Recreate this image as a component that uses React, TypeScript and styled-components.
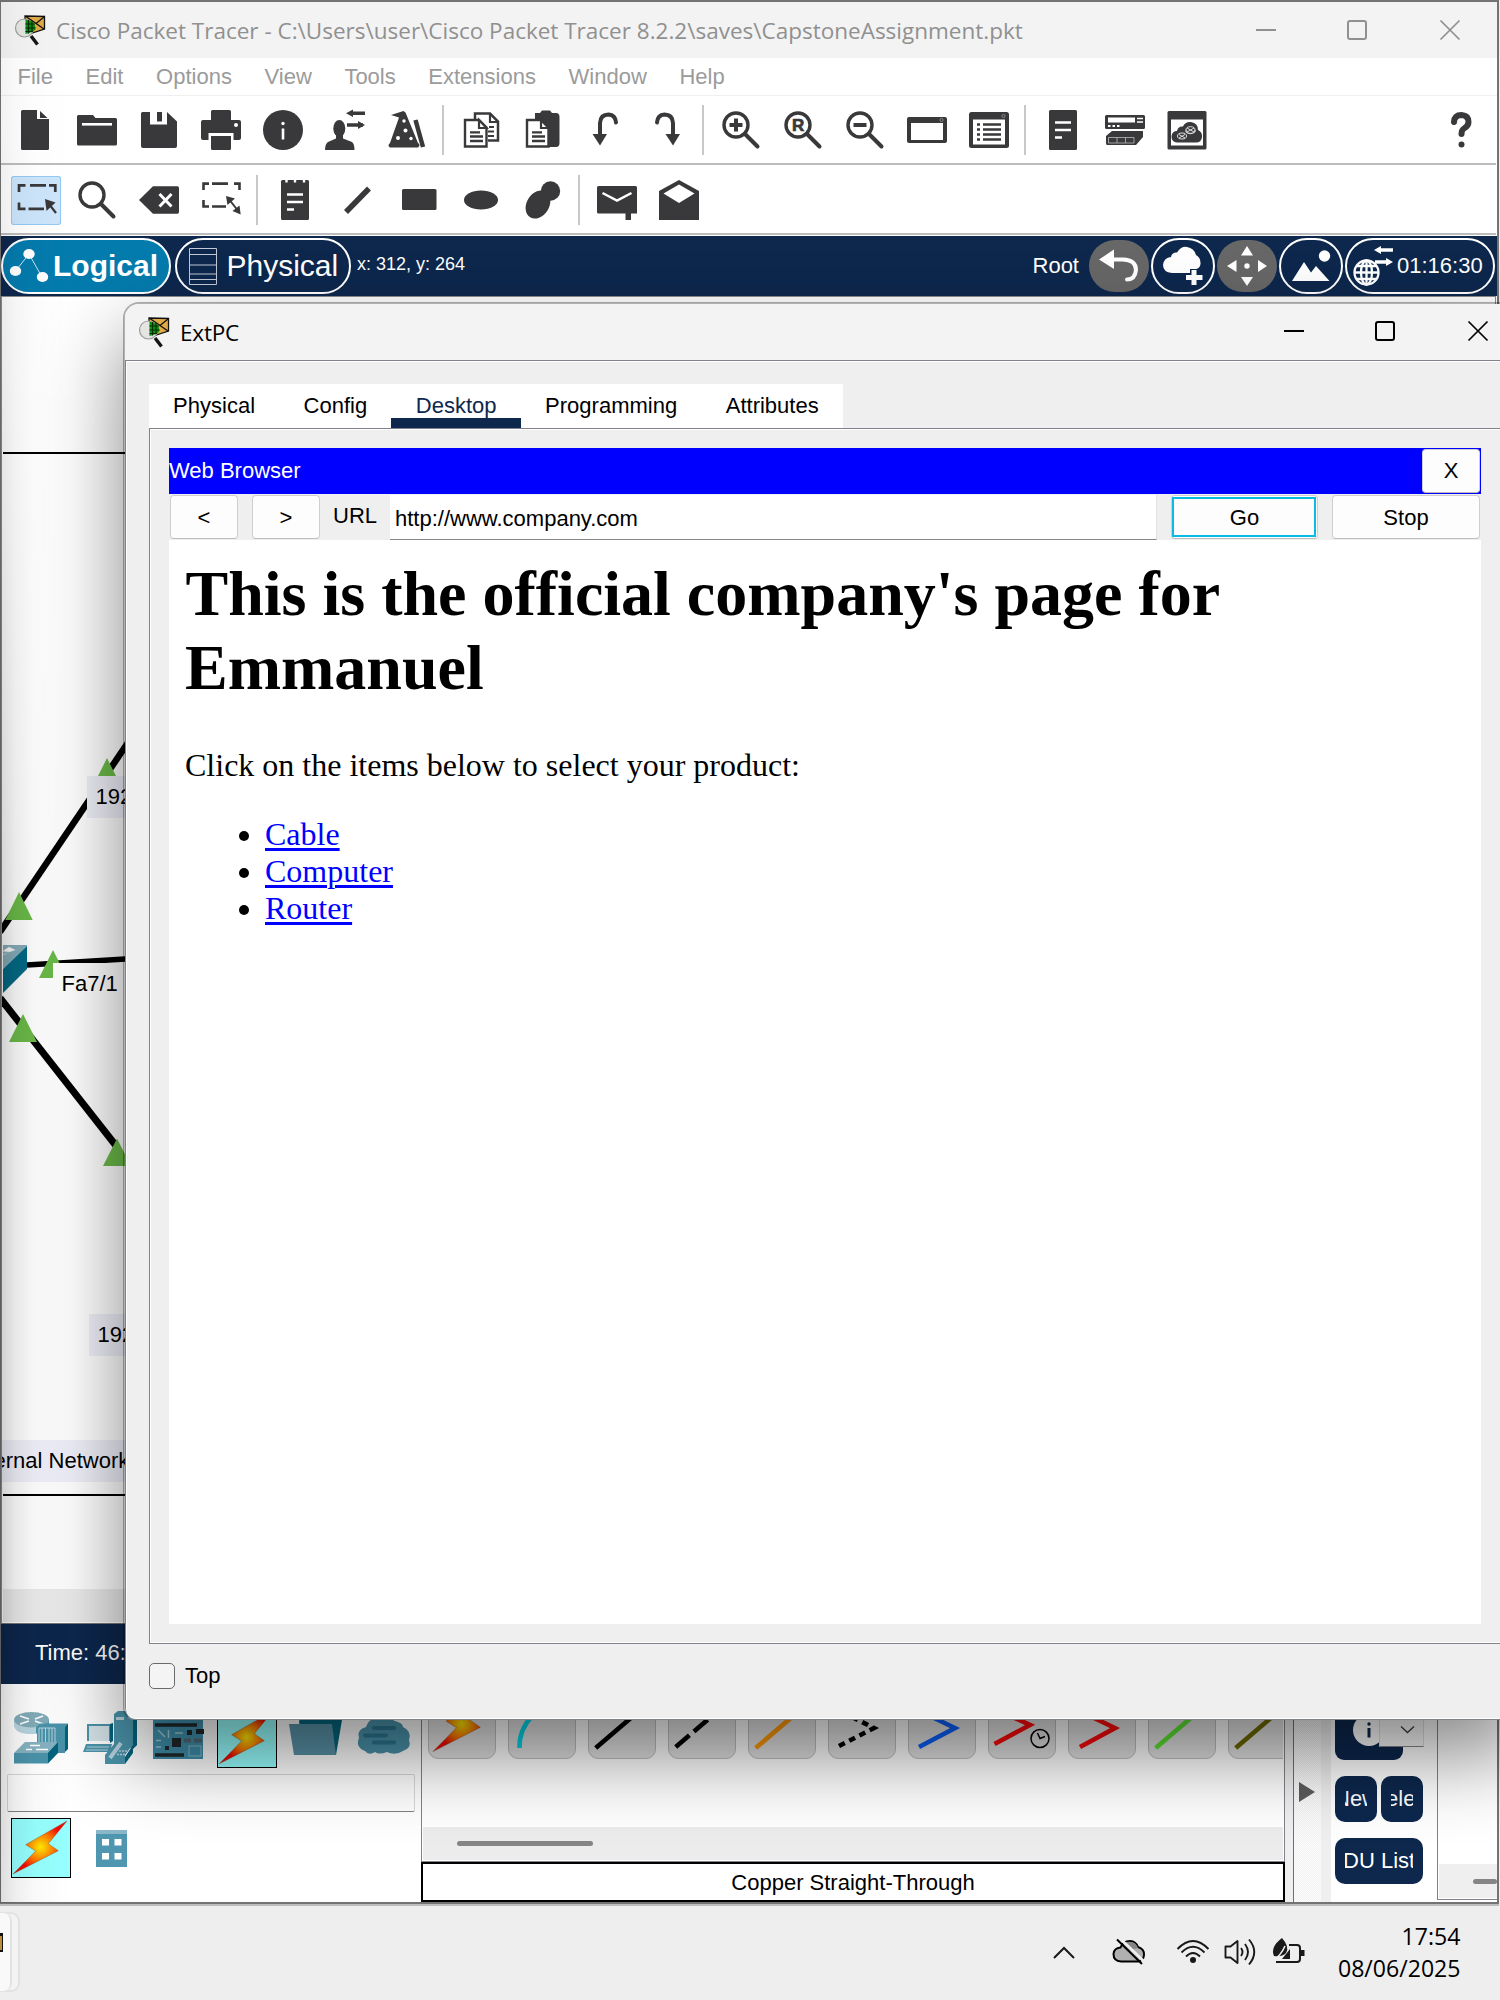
import React from "react";
import styled, { createGlobalStyle } from "styled-components";

const INK = "#39393b";
const NAVY = "#0d274d";
const LINE = "#7f8389";
const ARIAL = `"Liberation Sans", Arial, sans-serif`;
const SEGOE = `"Open Sans", "Noto Sans", sans-serif`;

const GlobalStyle = createGlobalStyle`
  *, *::before, *::after { box-sizing: border-box; }
  html, body { margin: 0; padding: 0; background: #eee; }
  body { font-family: ${ARIAL}; font-size: 22px; color: #000; overflow: hidden; }
  svg { display: block; flex: none; overflow: visible; }
`;

const Screen = styled.div`
  position: relative;
  width: 1500px;
  height: 2000px;
  display: flex;
  flex-direction: column;
  overflow: hidden;
  background: #eee;
`;

/* ---------- main window ---------- */

const MainWindow = styled.div`
  width: 1499px;
  height: 1904px;
  display: flex;
  flex-direction: column;
  background: #fff;
  border: solid #737373;
  border-width: 2px 2px 2px 1px;
  box-shadow: 0 2px 0 #bdbdbd;
  flex: none;
`;

const TitleBar = styled.div<{ $active?: boolean }>`
  height: 56px;
  flex: none;
  display: flex;
  align-items: center;
  background: #f3f3f3;
  color: ${(p) => (p.$active ? "#000" : "#909090")};
  padding-left: 14px;
  gap: 10px;
  font-family: ${SEGOE};
`;

const TitleText = styled.span<{ $spacing: number }>`
  font-size: 22.5px;
  line-height: 56px;
  letter-spacing: ${(p) => p.$spacing}px;
  white-space: nowrap;
  padding-top: 2px;
`;

const WindowButtons = styled.div<{ $right: number; $lift?: number }>`
  margin-left: auto;
  margin-right: ${(p) => p.$right}px;
  margin-bottom: ${(p) => p.$lift ?? 0}px;
  display: flex;
  gap: 72px;

  svg:nth-child(2) { margin: 0 1px 0 -1px; }
`;

const MenuBar = styled.div`
  height: 38px;
  flex: none;
  display: flex;
  align-items: center;
  gap: 32.6px;
  padding-left: 16.5px;
  color: #9b9b9b;
  border-bottom: 1px solid #efefef;
`;

const ToolBar = styled.div<{ $height: number; $drop?: number }>`
  height: ${(p) => p.$height}px;
  margin-right: 1px;
  flex: none;
  display: flex;
  align-items: center;
  padding-left: 3px;
  padding-top: ${(p) => p.$drop ?? 0}px;
  border-bottom: 2px solid #bdbdbd;
`;

const Tool = styled.div<{ $selected?: boolean }>`
  width: ${(p) => (p.$selected ? 50 : 62)}px;
  height: 49px;
  margin: ${(p) => (p.$selected ? "0 5px 0 7px" : "0")};
  display: flex;
  align-items: center;
  justify-content: center;
  border-radius: 3px;
  background: ${(p) => (p.$selected ? "#cce5fb" : "transparent")};
  box-shadow: ${(p) => (p.$selected ? "inset 0 0 0 1px #92c9f5" : "none")};
`;

const ToolDivider = styled.div`
  width: 2px;
  height: 50px;
  margin: 0 6px 0 4px;
  background: #c8c8c8;
`;

const Push = styled.div`
  margin-left: auto;
  margin-right: 4px;
`;

const NavBar = styled.div`
  height: 60px;
  margin-top: 1px;
  flex: none;
  display: flex;
  align-items: center;
  gap: 2px;
  background: ${NAVY};
  color: #fff;
`;

const Pill = styled.div<{ $w: number; $bg?: string; $bold?: boolean; $pad?: number; $ml?: number }>`
  width: ${(p) => p.$w}px;
  height: 56px;
  margin-left: ${(p) => p.$ml ?? 0}px;
  border: 2px solid #fff;
  border-radius: 28px;
  background: ${(p) => p.$bg || "transparent"};
  display: flex;
  align-items: center;
  padding-left: ${(p) => p.$pad ?? 0}px;
  font-size: 30px;
  font-weight: ${(p) => (p.$bold ? 700 : 400)};
  justify-content: ${(p) => (p.$pad === undefined ? "center" : "flex-start")};
`;

const PillText = styled.span<{ $gap: number }>`
  margin-left: ${(p) => p.$gap}px;
`;

const GreyPill = styled.div`
  width: 60px;
  height: 52px;
  border-radius: 26px;
  background: #676767;
  display: flex;
  align-items: center;
  justify-content: center;
`;

const Coordinates = styled.span`
  font-size: 18px;
  margin-left: 4px;
  padding-bottom: 4px;
`;

const RootLabel = styled.span`
  margin-left: auto;
  margin-right: 8px;
`;

const ClockText = styled.span`
  font-size: 22px;
  margin-left: 4px;
`;

const Workspace = styled.div`
  position: relative;
  height: 1328px;
  flex: none;
  overflow: hidden;
  border: 1px solid #8d8d8d;
  border-bottom-color: #777;
  margin-right: 1px;
  background: #fff;
`;

const CanvasDrawing = styled.svg`
  position: absolute;
  left: 1px;
  top: 0;
`;

const CanvasLabel = styled.span<{ $x: number; $y: number; $w: number; $bg?: string }>`
  position: absolute;
  left: ${(p) => p.$x - 2}px;
  top: ${(p) => p.$y - 297}px;
  width: ${(p) => p.$w}px;
  height: 42px;
  line-height: 42px;
  padding-left: 8.5px;
  white-space: nowrap;
  background: ${(p) => p.$bg || "#f0f0fa"};
`;

const TimeBar = styled.div`
  height: 60px;
  flex: none;
  background: ${NAVY};
  color: #fff;
  line-height: 57px;
  padding-left: 34px;
`;

const BottomArea = styled.div`
  flex: 1;
  display: flex;
  min-height: 0;
`;

const Palette = styled.div`
  width: 420px;
  flex: none;
  padding-top: 24px;
`;

const DeviceRow = styled.div`
  display: flex;
  height: 60px;
  align-items: center;
  padding-left: 6px;
`;

const DeviceSlot = styled.div<{ $w?: number }>`
  width: ${(p) => p.$w || 68.5}px;
  height: 60px;
  display: flex;
  align-items: center;
  justify-content: center;
  flex: none;
`;

const BoltFrame = styled.div`
  width: 60px;
  height: 60px;
  border: 1px solid #000;
  background: #97ffff;
`;

const SearchField = styled.div`
  width: 408px;
  height: 38px;
  margin: 6px 0 6px 6px;
  border: 1px solid #d8d8d8;
  border-bottom-color: #808080;
  border-radius: 2px;
  background: #ffffff;
`;

const Connections = styled.div`
  width: 864px;
  flex: none;
  display: flex;
  flex-direction: column;
`;

const ConnectionFrame = styled.div`
  height: 178px;
  border: solid ${LINE};
  border-width: 0 1px 1px 1px;
  display: flex;
  flex-direction: column;
  overflow: hidden;
`;

const TileRow = styled.div`
  display: flex;
  gap: 12px;
  padding: 6.5px 0 0 6px;
  height: 143px;
  overflow: hidden;
  margin-right: 1px;
`;

const Tile = styled.div`
  width: 68px;
  height: 68px;
  flex: none;
  border: 1.5px solid #bfbfbf;
  border-radius: 10px;
  background: #e3e3e3;
  svg { margin: -1.5px; }
`;

const TileScroll = styled.div`
  height: 33px;
  margin: 0 1px;
  background: #ececec;
  display: flex;
  align-items: center;
  padding: 0 0 0 34px;
`;

const Thumb = styled.div<{ $w: number }>`
  width: ${(p) => p.$w}px;
  height: 5px;
  border-radius: 3px;
  background: #858585;
`;

const ConnectionName = styled.div`
  height: 40px;
  border: 2px solid #000;
  line-height: 37px;
  text-align: center;
`;

const Splitter = styled.div`
  width: 46px;
  flex: none;
  display: flex;
  background: #efefef;
`;

const SplitterGrip = styled.div`
  width: 28px;
  margin-left: 8px;
  border-left: 1px solid #707070;
  background: repeating-conic-gradient(#f0f0f0 0% 25%, #fff 0% 50%) 0 0 / 2px 2px;
  padding: 98px 0 0 5px;
`;

const PduColumn = styled.div`
  width: 106px;
  flex: none;
  padding: 14px 0 0 4px;
  display: flex;
  flex-direction: column;
`;

const PduTop = styled.div`
  display: flex;
  height: 62px;
`;

const PduInfo = styled.div`
  width: 68px;
  height: 62px;
  flex: none;
  border-radius: 9px;
  background: ${NAVY};
  padding: 16px 0 0 18px;
`;

const Combo = styled.div`
  width: 45px;
  height: 49px;
  flex: none;
  margin-left: -24px;
  border: 1px solid #e0e0e0;
  border-bottom-color: #868686;
  background: #fbfbfb;
  display: flex;
  justify-content: center;
  padding: 26px 0 0 11px;
`;

const PduButtons = styled.div`
  display: flex;
  gap: 4px;
  margin-top: 16px;
`;

const NavyButton = styled.div<{ $w: number; $shift?: number }>`
  width: ${(p) => p.$w}px;
  height: 46px;
  border-radius: 10px;
  background: ${NAVY};
  color: #fff;
  padding: 0 10px;
  line-height: 45px;

  span {
    display: flex;
    justify-content: center;
    overflow: hidden;
    white-space: nowrap;
    text-indent: ${(p) => p.$shift ?? 0}px;
  }
`;

const PduList = styled.div`
  flex: 1;
  height: 216px;
  border: solid ${LINE};
  border-width: 0 0 1px 1px;
  display: flex;
  flex-direction: column;
  justify-content: flex-end;
  overflow: hidden;
`;

const PduScroll = styled.div`
  height: 34px;
  margin: 0 0 1px 1px;
  background: #efefef;
  display: flex;
  align-items: center;
  padding: 0 0 0 34px;
`;

const EdgeShade = styled.div`
  position: absolute;
  left: 0;
  top: 0;
  width: 70px;
  height: 1903px;
  background: linear-gradient(to right, rgba(0,0,0,.19), rgba(0,0,0,.09) 22%, rgba(0,0,0,.03) 50%, rgba(0,0,0,0));
  mask-image: linear-gradient(to bottom, rgba(0,0,0,.2), rgba(0,0,0,.45) 18%, #000 50%, #000 85%, rgba(0,0,0,.7));
`;

/* ---------- ExtPC window ---------- */

const DeviceWindow = styled.div`
  position: absolute;
  left: 123px;
  top: 302px;
  width: 1400px;
  height: 1418px;
  border: 2px solid rgba(0, 0, 0, 0.3);
  border-bottom: 1px solid #7f8489;
  border-radius: 16px 0 0 12px;
  background: #efefef;
  background-clip: padding-box;
  box-shadow: 0 36px 80px rgba(0, 0, 0, 0.47);
  overflow: hidden;
  display: flex;
  flex-direction: column;
`;

const DeviceBody = styled.div`
  flex: 1;
  border: solid ${LINE};
  border-width: 1px 0 0 1px;
  box-shadow: inset 1px 1px 0 #fff, inset 0 -1px 0 #fff;
  border-bottom-left-radius: 10px;
  padding: 23px 0 0 23px;
`;

const Tabs = styled.div`
  display: inline-flex;
  height: 44px;
  background: #fff;
  vertical-align: top;
`;

const Tab = styled.div<{ $active?: boolean }>`
  padding: 0 24.5px 0 24.1px;
  line-height: 44px;
  color: ${(p) => (p.$active ? NAVY : "#000")};
  box-shadow: ${(p) => (p.$active ? `inset 0 -10px 0 ${NAVY}` : "none")};
  margin-left: ${(p) => (p.$active ? "-0.6px" : "0")};
  padding-left: ${(p) => (p.$active ? "24.7px" : "24.1px")};
`;

const TabPanel = styled.div`
  height: 1216px;
  border: 1px solid ${LINE};
  box-shadow: inset 1px 1px 0 #fff, inset 0 -1px 0 #fff;
  padding: 19px 0 0 19px;
`;

const Browser = styled.div`
  width: 1312px;
  height: 1176px;
  display: flex;
  flex-direction: column;
`;

const BrowserTitle = styled.div`
  height: 46px;
  background: #0000ff;
  color: #fff;
  display: flex;
  justify-content: space-between;
  padding: 1px;
  line-height: 43px;
  span { margin-left: -1px; }
`;

const Button = styled.div<{ $w: number; $ml?: number; $focus?: boolean; $line?: number }>`
  width: ${(p) => p.$w}px;
  height: 44px;
  flex: none;
  margin-left: ${(p) => p.$ml || 0}px;
  border: 1px solid #cfcfcf;
  border-bottom-color: #bcbcbc;
  border-radius: 4px;
  background: #fdfdfd;
  color: #000;
  text-align: center;
  line-height: ${(p) => p.$line ?? 43}px;
  position: relative;
  &::after {
    content: "";
    display: ${(p) => (p.$focus ? "block" : "none")};
    position: absolute;
    inset: 1px 1px 1px 0;
    border: 2px solid #0bbbe3;
  }
`;

const AddressRow = styled.div`
  height: 46px;
  display: flex;
  padding: 1px;
`;

const UrlLabel = styled.span`
  width: 70px;
  padding-left: 13px;
  line-height: 42px;
`;

const UrlInput = styled.div`
  width: 767px;
  height: 45px;
  background: #fff;
  border-right: 1px solid #e2e2e2;
  border-bottom: 1px solid #868686;
  padding-left: 5px;
  line-height: 47px;
`;

const Page = styled.div`
  flex: 1;
  background: #fff;
  padding: 17px 16px 16px;
  font-family: "Liberation Serif", "Times New Roman", serif;
  font-size: 32px;
  line-height: 37px;

  h1 {
    margin: 0 0 42px;
    font-size: 64px;
    line-height: 74px;
    max-width: 1150px;
    text-indent: 0.5px;
  }
  p { margin: 0 0 32px; }
  ul { margin: 0; padding-left: 80px; }
  a { color: #0000ff; text-decoration: underline; text-decoration-thickness: 3px; text-underline-offset: 3px; }
`;

const TopCheck = styled.label`
  display: flex;
  align-items: center;
  gap: 10px;
  margin-top: 18px;
  line-height: 27px;
`;

const Box = styled.span`
  width: 26px;
  height: 26px;
  border: 1.5px solid #6b6b6b;
  border-radius: 5px;
  background: #f4f4f4;
`;

/* ---------- taskbar ---------- */

const Taskbar = styled.div`
  margin-top: 2px;
  height: 94px;
  display: flex;
  align-items: center;
  padding-bottom: 2px;
  background: #eee;
`;

const TaskCard = styled.div`
  width: 20px;
  height: 80px;
  border: 2px solid #e2e2e2;
  border-left: 0;
  border-radius: 0 9px 9px 0;
  background: #f3f3f3;
  display: flex;
`;

const TaskCardFront = styled.div`
  width: 12px;
  height: 78px;
  margin-top: -1px;
  border-right: 2px solid #e2e2e2;
  border-radius: 0 8px 8px 0;
  background: #f9f9f9;
  display: flex;
  align-items: center;
  padding-bottom: 20px;
`;

const TaskIconEdge = styled.div`
  width: 3px;
  height: 19px;
  background: #b98e3c;
  border: solid #111;
  border-width: 3px 1.5px 2px 0;
`;

const Tray = styled.div`
  margin-left: auto;
  display: flex;
  align-items: center;
  color: #191919;
`;

const TraySlot = styled.div<{ $w: number }>`
  width: ${(p) => p.$w}px;
  display: flex;
  justify-content: center;
`;

const Clock = styled.div`
  width: 142px;
  margin-right: 39.5px;
  text-align: right;
  font-family: ${SEGOE};
  font-size: 23.1px;
  line-height: 32px;
`;

/* ---------- icons ---------- */

const Icon = ({ children, size = 40, box = 40 }: { children: React.ReactNode; size?: number; box?: number }) => (
  <svg width={size} height={size} viewBox={`0 0 ${box} ${box}`} fill={INK}>
    {children}
  </svg>
);

const AppLogo = () => (
  <svg width="31" height="31" viewBox="0 0 31 31">
    <path d="M10 1 L29.5 1.5 L29.5 14 L14 19 L10 15 Z" fill="#e0aa48" stroke="#111" strokeWidth="1.3" />
    <path d="M11 1.5 L21 8.5 L29 2 M21 8.5 L29 14" fill="none" stroke="#111" strokeWidth="1.3" />
    <circle cx="9.5" cy="13" r="9" fill="#e4e4e0" stroke="#9c9c9c" strokeWidth="1.2" />
    <path d="M10.5 4.5 Q21 6 20.5 14 Q19 17 10.5 19 Z" fill="#0a8f12" />
    <path d="M13.5 5 V18.5 M17 6 V17 M10.5 9 H20 M10.5 13 H20.5 M10.5 16.5 H18" stroke="#062c06" strokeWidth="1.1" />
    <path d="M16 21 L22.5 29.5" stroke="#151515" strokeWidth="3.4" />
  </svg>
);

const Caption = ({ color }: { color: string }) => (
  <>
    <svg width="20" height="20" stroke={color} strokeWidth="2" fill="none"><path d="M0 10 H20" /></svg>
    <svg width="20" height="20" stroke={color} strokeWidth="2" fill="none"><rect x="1" y="1" width="18" height="18" rx="2" /></svg>
    <svg width="20" height="20" stroke={color} strokeWidth="1.7" fill="none"><path d="M0.5 0.5 L19.5 19.5 M19.5 0.5 L0.5 19.5" /></svg>
  </>
);

const Magnifier = ({ children }: { children?: React.ReactNode }) => (
  <Icon>
    <circle cx="15" cy="15" r="12" fill="none" stroke={INK} strokeWidth="3.4" />
    <path d="M24 24 L36.5 36.5" stroke={INK} strokeWidth="4" strokeLinecap="round" />
    {children}
  </Icon>
);

const FrontSheet = () => (
  <>
    <path d="M4 10 H18 L25.5 17.5 V36.5 H4 Z" fill="#fff" stroke={INK} strokeWidth="2.4" />
    <path d="M18 10 V18 H25.5 Z" fill="#fff" stroke={INK} strokeWidth="2.2" />
    <path d="M9 22.3 H19 M9 26.5 H22 M9 31 H22" stroke={INK} strokeWidth="2.3" />
  </>
);

const NewIcon = () => <Icon><path d="M7.5 0 H22 V9 H34 V38.5 Q34 40 32.5 40 H7.5 Q6 40 6 38.5 V1.5 Q6 0 7.5 0 Z M25 1 L32.5 8 H25 Z" /></Icon>;
const OpenIcon = () => <Icon><path d="M1.5 5 H16 L18.5 8 H38.5 Q40 8 40 9.5 V34 Q40 35.500 38.5 35.500 H1.500 Q0 35.500 0 34 V6.500 Q0 5 1.500 5 Z" /><path d="M5 14.300 H35" stroke="#fff" strokeWidth="2.600" /></Icon>;
const SaveIcon = () => <Icon><path d="M3.500 2 H11 V14.500 H28 V2 L38 11.500 V36 Q38 38 36 38 H4 Q2 38 2 36 V3.500 Q2 2 3.500 2 Z" /><path d="M18 2 H23 V11.500 H18 Z" /></Icon>;
const PrintIcon = () => <Icon><path d="M11.500 0 H28.500 Q30 0 30 1.500 V10 H38 Q40 10 40 12 V28 Q40 30 38 30 H32.500 V23 H7.500 V30 H2 Q0 30 0 28 V12 Q0 10 2 10 H10 V1.500 Q10 0 11.500 0 Z M10 26 H30 V38.500 Q30 40 28.500 40 H11.500 Q10 40 10 38.500 Z" /><circle cx="35" cy="15" r="2" fill="#fff" /></Icon>;
const InfoIcon = () => <Icon><circle cx="20" cy="20" r="20" /><circle cx="20" cy="13.500" r="1.700" fill="#fff" /><path d="M20 18.500 V29.500" stroke="#fff" strokeWidth="2.600" /></Icon>;
const UserIcon = () => (
  <Icon>
    <ellipse cx="14.300" cy="18.500" rx="6" ry="8.500" />
    <path d="M11 24 H18 V28.500 L27 32 Q29.500 34 29.500 40 H0 Q0 34 3 32 L11 28.500 Z" />
    <path d="M25 3.300 H40 M22 15 H38" stroke={INK} strokeWidth="3.400" />
    <path d="M21 3.300 L28 -0.500 V7 Z M40 15 L33 11 V19 Z" />
  </Icon>
);
const WizardIcon = () => (
  <Icon>
    <path d="M4 5 L16.500 1 L18.500 2.500 L31 33 Q34 35 31 37.500 H3 Q0 35.500 3 33 L12 7.500 Z" />
    <path d="M28.500 10 L36 37" stroke={INK} strokeWidth="4.500" />
    <g fill="#fff"><circle cx="17" cy="11" r="1.700" /><circle cx="18.500" cy="20.500" r="2" /><circle cx="11" cy="28" r="2" /><circle cx="24" cy="28.500" r="1.700" /></g>
  </Icon>
);
const CopyIcon = () => (
  <Icon>
    <path d="M14 9 V3.500 H29 L37 11.500 V30.500 H27" fill="none" stroke={INK} strokeWidth="2.500" />
    <path d="M29 3.500 V12 H37 M28 17 H33 M27 21.500 H33 M27 26 H33" fill="none" stroke={INK} strokeWidth="2.200" />
    <FrontSheet />
  </Icon>
);
const PasteIcon = () => <Icon><path d="M12 3 H17 L19 0.500 H27 L29 3 H33 Q36.500 3 36.500 7 V33 Q36.500 37 33 37 H12 Z" /><FrontSheet /></Icon>;
const UndoIcon = () => <Icon><path d="M15 24 V13 Q15.500 4.500 23.500 4.500 Q30.500 5 31 12.500" fill="none" stroke={INK} strokeWidth="4" strokeLinecap="round" /><path d="M7.500 24 H22 L15 35.500 Z" /></Icon>;
const RedoIcon = () => <Icon><path d="M26 24 V13 Q25.500 4.500 17.500 4.500 Q10.500 5 10 12.500" fill="none" stroke={INK} strokeWidth="4" strokeLinecap="round" /><path d="M33 24 H18.500 L26 35.500 Z" /></Icon>;
const RLetter = styled.text`
  font: 700 17px ${ARIAL};
  stroke: ${INK};
  stroke-width: 0.7px;
`;
const WindowIcon = () => <Icon><rect x="0" y="7" width="40" height="26" rx="2" /><rect x="4" y="13" width="32" height="17" fill="#fff" /><circle cx="34.500" cy="10" r="1.600" fill="none" stroke="#999" strokeWidth="0.800" /></Icon>;
const ListIcon = () => (
  <Icon>
    <rect x="0" y="2" width="40" height="36" rx="2.500" /><rect x="4" y="9.500" width="32" height="25" fill="#fff" />
    <path d="M8 14.500 H11 M8 19.500 H11 M8 24.500 H11 M8 29.500 H11 M14 14.500 H32 M14 19.500 H32 M14 24.500 H32 M14 29.500 H32" stroke={INK} strokeWidth="2.600" />
    <circle cx="34.500" cy="6" r="1.600" fill="none" stroke="#999" strokeWidth="0.800" />
  </Icon>
);
const DocIcon = () => <Icon><rect x="6" y="0" width="28" height="40" rx="1.500" /><path d="M12 12.500 H28 M12 20 H28 M12 27.500 H19" stroke="#fff" strokeWidth="2.300" /></Icon>;
const DevicesIcon = () => (
  <Icon>
    <rect x="0" y="5" width="40" height="14" rx="1.500" />
    <rect x="3" y="7.500" width="27" height="5" fill="#fff" />
    <path d="M32 8.500 H38 M32 12 H38" stroke="#fff" strokeWidth="1.300" />
    <path d="M3 16 H5.500 M7.500 16 H10 M12 16 H14.500" stroke="#fff" strokeWidth="2" />
    <path d="M7 21 H38 V27 L31 35 H2 Q1 35 1 33 V26 Z" />
    <path d="M3.500 27.500 H29 V33 H3.500 Z M12 27.500 V33 M20.500 27.500 V33" fill="none" stroke="#bbb" strokeWidth="0.800" />
  </Icon>
);
const CloudWindowIcon = () => (
  <Icon>
    <rect x="0.500" y="1" width="39" height="38.500" rx="1.500" /><rect x="4" y="9.500" width="32" height="26" fill="#fff" />
    <path d="M10 32.500 Q4.500 32 4.500 26.500 Q5 21 10 21 Q11 16 16 16.500 Q18 11.500 24 12 Q31 13 31 20 Q35.500 22 35 27 Q34.500 32.500 29 32.500 Z" />
    <g fill="none" stroke="#ddd" strokeWidth="1"><ellipse cx="23.500" cy="20" rx="4.500" ry="3.300" /><path d="M20 18 L27 22 M27 18 L20 22 M19 20 V22 Q23 25.500 28 22 V20" /><ellipse cx="15" cy="26" rx="4.500" ry="3" /><path d="M12 24.500 L18 28 M18 24.500 L12 28" /></g>
  </Icon>
);
const HelpIcon = () => <Icon><path d="M13 12 Q13.500 5 20.500 5 Q27.500 5.500 27.500 12 Q27.500 16 23 18.500 Q20.500 20 20.500 24" fill="none" stroke={INK} strokeWidth="6" strokeLinecap="round" /><circle cx="20.500" cy="34.500" r="3" /></Icon>;

const SelectIcon = () => (
  <Icon>
    <path d="M3 12 V5.300 H9.500 M14 5.300 H30 M33 5.300 H39.300 V12 M3 22.500 V28.800 H9.500 M12.500 28.800 H28" fill="none" stroke={INK} strokeWidth="2.700" />
    <path d="M29 19 L39.500 22.500 L30.500 31 Z" /><path d="M33 24 L40 33" stroke={INK} strokeWidth="2.200" />
  </Icon>
);
const ResizeIcon = () => (
  <Icon>
    <path d="M2.500 10 V3.600 H8 M11 3.600 H27 M33 3.600 H38.500 V10 M2.500 20 V26.500 H8 M11 26.500 H25" fill="none" stroke={INK} strokeWidth="2.600" />
    <path d="M27 18 L38 32" stroke={INK} strokeWidth="2" /><path d="M25 16 L34 18.500 L26.500 25 Z M39.700 34.500 L38.500 25.500 L31.500 31 Z" />
  </Icon>
);
const EraseIcon = () => <Icon><path d="M0 20 L14 6.300 H38.500 Q40 6.300 40 8 V32 Q40 33.700 38.500 33.700 H14 Z" /><path d="M20.500 14 L32.500 26.500 M32.500 14 L20.500 26.500" stroke="#fff" strokeWidth="3" /></Icon>;
const NoteIcon = () => <Icon><rect x="6" y="0" width="28" height="40" rx="1.500" /><path d="M12 14.500 H28 M12 22 H28 M12 29.500 H19" stroke="#fff" strokeWidth="2.300" /><path d="M11.500 0 V2.500 M20 0 V2.500 M29 0 V2.500" stroke="#fff" strokeWidth="2.400" /></Icon>;
const LineIcon = () => <Icon><path d="M9 32 L32 8.500" stroke={INK} strokeWidth="5.500" /></Icon>;
const RectIcon = () => <Icon><rect x="3" y="9" width="34.500" height="21" rx="1.500" /></Icon>;
const EllipseIcon = () => <Icon><ellipse cx="20" cy="20" rx="17" ry="9.500" /></Icon>;
const BlobIcon = () => <Icon><circle cx="27.500" cy="11" r="9.700" /><ellipse cx="15" cy="24.500" rx="11.200" ry="15" transform="rotate(32 15 24.500)" /></Icon>;
const MailIcon = () => <Icon><path d="M1.500 6 H38.500 Q40 6 40 7.500 V33.500 H34 V40 H28.500 V33.500 H1.500 Q0 33.500 0 32 V7.500 Q0 6 1.500 6 Z" /><path d="M5.500 13 L20 20.500 L34.500 13" fill="none" stroke="#fff" strokeWidth="2.500" /></Icon>;
const OpenMailIcon = () => <Icon><path d="M0 11 L20 0 L40 11 V40 H0 Z" /><path d="M4.500 13.500 L20 4.500 L35.500 13.500 L20 23 Z" fill="#fff" /></Icon>;

const NetworkGlyph = () => (
  <svg width="40" height="36" viewBox="0 0 40 36"><path d="M6.500 23 L20 6 L33 29" fill="none" stroke="#cfe6f2" strokeWidth="1" /><g fill="#fff"><ellipse cx="20" cy="6" rx="5.700" ry="5" /><ellipse cx="6.500" cy="23" rx="5.700" ry="5" /><ellipse cx="33.500" cy="29" rx="5.700" ry="5" /></g></svg>
);
const RackGlyph = () => (
  <svg width="28" height="37" viewBox="0 0 28 37"><path d="M0.500 0.500 H27.500 V36.500 H0.500 Z M0.500 6.500 H27.500 M0.500 17 H27.500 M0.500 26 H27.500 M0.500 31.500 H27.500" fill="none" stroke="#c3c9d4" strokeWidth="1" /></svg>
);
const BackGlyph = () => <svg width="40" height="34" viewBox="0 0 40 34"><path d="M12 10.500 H24 Q37 11 37 21 Q36 30.500 28 30.500" fill="none" stroke="#fff" strokeWidth="4" strokeLinecap="round" /><path d="M0 10.500 L15 0.500 V20 Z" fill="#fff" /></svg>;
const CloudPlusGlyph = () => <svg width="40" height="40" viewBox="0 0 40 40" fill="#fff"><path d="M9 27 Q0 26 0 19 Q1 11.500 8 11 Q9 6 14 6.500 Q18 0 24 1 Q31 2 33 9 Q38 12 37.500 18 Q37 22 33.500 23 H27 V27 Z" /><path d="M31 24 V39 M23 31.500 H39.500" stroke="#fff" strokeWidth="5" /></svg>;
const MoveGlyph = () => <svg width="40" height="40" viewBox="0 0 40 40" fill="#fff"><path d="M20 0 L26 9.500 H14 Z M20 40 L26 31 H14 Z M0 20 L9.500 14 V26 Z M40 20 L31 14 V26 Z" /><circle cx="20" cy="20" r="2.700" /></svg>;
const HillsGlyph = () => <svg width="40" height="34" viewBox="0 0 40 34" fill="#fff"><path d="M1 32 L13 13 L20 23.500 L25 17 L38.500 32 Z" /><circle cx="33.500" cy="7" r="5.700" /></svg>;
const GlobeGlyph = () => (
  <svg width="40" height="40" viewBox="0 0 40 40" fill="none" stroke="#fff" strokeWidth="2.300"><circle cx="13.500" cy="26.500" r="12" /><ellipse cx="13.500" cy="26.500" rx="5.500" ry="12" /><path d="M13.500 14 V39 M1.500 26.500 H25.500 M3 20 H24 M3 33 H24" /><path d="M24 4 H40 M22 16 H37" strokeWidth="3.400" /><path d="M21 4 L28 0 V8 Z M40 16 L33 12 V20 Z" fill="#fff" stroke="none" /></svg>
);

const boltShape = "M56 3 L14.700 26.700 L24.700 33 L2.300 55.700 L47.300 32.700 L37.300 25.700 Z";
const Bolt = () => (
  <>
    <defs>
      <radialGradient id="bolt" gradientUnits="userSpaceOnUse" cx="29.500" cy="29" r="27">
        <stop offset="0" stopColor="#ffee00" /><stop offset="0.500" stopColor="#ff7a00" /><stop offset="0.900" stopColor="#f50800" />
      </radialGradient>
    </defs>
    <path d={boltShape} fill="url(#bolt)" stroke="#8a4a20" strokeWidth="0.400" />
  </>
);
const BoltIcon = () => <BoltFrame><svg width="58" height="58" viewBox="1 1 58 58"><Bolt /></svg></BoltFrame>;

const RouterArt = () => (
  <svg width="54" height="54" viewBox="0 0 54 54">
    <path d="M0 9 V15 Q2 23 17 23 Q33 23 35 15 V9 Z" fill="#b9d6e0" />
    <path d="M22 22.500 Q33 21 35 15 V9 Q30 14 22 16 Z" fill="#4b94ab" />
    <ellipse cx="17.500" cy="8.800" rx="17.500" ry="7.800" fill="#82adba" />
    <path d="M6 5 L15 8 M29 5 L21 8 M6 13 L15 10 M29 13 L21 10" stroke="#fff" strokeWidth="1.800" />
    <path d="M23 15 L26 12.500 H54 L51 15.500 V42 H23 Z" fill="#4b94ab" /><path d="M54 12.500 V38 L51 41 V15.500 Z" fill="#04647e" />
    <path d="M25 17 H41 V34 H25 Z M28 17 V34 M31.500 17 V34 M35 17 V34 M38 17 V34" fill="none" stroke="#b7d4de" strokeWidth="1" />
    <path d="M0 42 L11 31 H44 L34 42 Z" fill="#86b3c2" /><path d="M0 42 H34 V52.500 H0 Z" fill="#4b94ab" /><path d="M34 42 L44 31 V42 L34 52.500 Z" fill="#04647e" />
    <path d="M16 34.500 H26 M22 38.500 H34 M12 38.500 H18" stroke="#fff" strokeWidth="1.400" />
  </svg>
);
const ComputerArt = () => (
  <svg width="54" height="54" viewBox="0 0 54 54">
    <path d="M31 3 L35 0 H54 V34 L50 37 H31 Z" fill="#4b94ab" /><path d="M50 4 L54 0 V34 L50 38 Z" fill="#04647e" /><path d="M33 6 H41 V9 H33 Z" fill="#bcd7e0" />
    <path d="M4 13 H29 V30 H4 Z" fill="#4b94ab" /><path d="M27 13 L30 12 V30 L27 32 Z" fill="#04647e" /><rect x="6" y="15" width="20" height="15" fill="#d5e3e8" />
    <path d="M3 33 H29 L27 41 H0 Z" fill="#4b94ab" /><path d="M4 36 H26 M3 39 H25" stroke="#b7d4de" strokeWidth="1" />
    <path d="M22 44 L31 33 H50 L42 44 V53 H22 Z" fill="#4b94ab" /><path d="M42 46 L50 34 V42 L42 53 Z" fill="#04647e" />
    <path d="M27 47 L38 32" stroke="#b7d4de" strokeWidth="4" /><path d="M36 40 H45 M34 43.500 H42" stroke="#b7d4de" strokeWidth="1.400" strokeDasharray="2 1" />
  </svg>
);
const BoardArt = () => (
  <svg width="51" height="50" viewBox="0 0 51 50">
    <rect x="0" y="4" width="50" height="42" fill="#3f8fab" />
    <path d="M2 12 H44 M2 42 H31" stroke="#20282c" strokeWidth="3.500" />
    <g fill="#20282c"><rect x="19" y="25" width="9" height="9" /><rect x="34" y="17" width="5" height="5" /><rect x="43" y="16" width="8" height="5" /><rect x="12" y="33" width="4" height="4" /></g>
    <path d="M31 27.500 H38 M41 27.500 H49" stroke="#536a76" strokeWidth="4" /><rect x="36" y="33" width="12" height="10" fill="none" stroke="#8cbacb" /><path d="M5 17 L12 24 M15.500 17 V25 M3 27.500 H8 M22 20 H30 M3 34 H8" stroke="#9fc7d4" strokeWidth="1.500" />
  </svg>
);
const FolderArt = () => <svg width="53" height="54" viewBox="0 0 53 54"><path d="M10 10 L13 6 H31 L33 9 H53 L47 44 H14 Z" fill="#04677f" /><path d="M0 13 H43 L47 44 H5 Z" fill="#5a93a8" /></svg>;
const CloudArt = () => (
  <svg width="54" height="54" viewBox="0 0 54 54">
    <path d="M8 40 Q-2 36 2 27 Q-1 19 9 16 Q12 6 22 8 Q31 5 38 10 Q46 12 46 16 Q55 20 52 29 Q55 37 46 40 Q38 45 30 41 Q22 44 18 41 Q12 45 8 40 Z" fill="#4b94ab" />
    <path d="M17 17 H37 M8 24.500 H29 M17 31.500 H37" stroke="#2b7791" strokeWidth="4" strokeLinecap="round" />
  </svg>
);
const BuildingArt = () => <svg width="31" height="37" viewBox="0 0 31 37"><rect width="31" height="37" fill="#4f97b0" /><rect width="31" height="4" fill="#8bb8c9" /><path d="M6 9 H13 V15.500 H6 Z M18.500 9 H25.500 V15.500 H18.500 Z M6 23 H13 V29.500 H6 Z M18.500 23 H25.500 V29.500 H18.500 Z" fill="#fff" /></svg>;

/* cable tiles: each path is drawn on a 68 × 68 tile */
const cables: { d: string; color: string; dash?: string; clock?: boolean }[] = [
  { d: "M11.500 58 Q11 40 24 26 Q36 14 52 12", color: "#00d7ec" },
  { d: "M7.700 58 L58 15", color: "#000" },
  { d: "M7.700 57 L58 14", color: "#000", dash: "18 6" },
  { d: "M7.700 58 L58 15", color: "#ff9a0a" },
  { d: "M11 56 L46 38 L18 24 L54 8", color: "#000", dash: "6.500 5" },
  { d: "M11 57 L47 38 L18 24 L54 8", color: "#0a62ff" },
  { d: "M6.500 54 L42 35 L18 24 L54 8", color: "#ff0a0a", clock: true },
  { d: "M12 57 L47 38 L18 24 L54 8", color: "#ff0a0a" },
  { d: "M7.700 58 L58 15", color: "#5ee632" },
  { d: "M7.700 58 L58 15", color: "#6e6a00" },
];

const CableTile = ({ d, color, dash, clock }: (typeof cables)[number]) => (
  <Tile>
    <svg width="68" height="68" viewBox="0 0 68 68" fill="none">
      <path d={d} stroke={color} strokeWidth="4.600" strokeDasharray={dash} strokeMiterlimit="8" />
      {clock && <g stroke="#000" strokeWidth="1.500"><circle cx="52" cy="48.500" r="9" /><path d="M49.500 43 L52 48.500 L57 46.500" /></g>}
    </svg>
  </Tile>
);

const Topology = () => (
  <CanvasDrawing width="1490" height="1326" viewBox="3 297 1490 1326">
    <path d="M3 453 H1490 M3 1495 H1490" stroke="#000" strokeWidth="2" />
    <path d="M0 932 L150 710" stroke="#000" strokeWidth="6.500" />
    <path d="M27 965 L150 957.500" stroke="#000" strokeWidth="5.600" />
    <path d="M0 998 L117 1147" stroke="#000" strokeWidth="7" />
    <path d="M3 945 H27 V946 L3 969 Z" fill="#86aebb" />
    <path d="M27 946 V969 L3 993 V969 Z" fill="#046a85" />
    <path d="M3 951 L9 947 L15 950 L9 952 Z M3 955 L7 953" fill="#fff" stroke="#dbe8ec" strokeWidth="0.600" />
    <g fill="#6bba49">
      <path d="M19 892 L32.700 920 H5.300 Z M107 758 L116 776 H98 Z M53 950 L67 978 H39 Z M23 1014 L37 1042 H9 Z M117 1138.500 L131 1166 H103 Z" />
    </g>
    <rect x="3" y="1589" width="1490" height="33" fill="#ececec" />
  </CanvasDrawing>
);

const ChevronDown = () => <svg width="15" height="9" viewBox="0 0 15 9"><path d="M1 1.500 L7.500 7.500 L14 1.500" fill="none" stroke="#3a3a3a" strokeWidth="1.300" /></svg>;

const App = () => (
  <Screen>
    <GlobalStyle />
    <MainWindow>
      <TitleBar>
        <AppLogo />
        <TitleText $spacing={0}>Cisco Packet Tracer - C:\Users\user\Cisco Packet Tracer 8.2.2\saves\CapstoneAssignment.pkt</TitleText>
        <WindowButtons $right={37}><Caption color="#909090" /></WindowButtons>
      </TitleBar>
      <MenuBar>
        {["File", "Edit", "Options", "View", "Tools", "Extensions", "Window", "Help"].map((m) => <span key={m}>{m}</span>)}
      </MenuBar>
      <ToolBar $height={69}>
        <Tool><NewIcon /></Tool>
        <Tool><OpenIcon /></Tool>
        <Tool><SaveIcon /></Tool>
        <Tool><PrintIcon /></Tool>
        <Tool><InfoIcon /></Tool>
        <Tool><UserIcon /></Tool>
        <Tool><WizardIcon /></Tool>
        <ToolDivider />
        <Tool><CopyIcon /></Tool>
        <Tool><PasteIcon /></Tool>
        <Tool><UndoIcon /></Tool>
        <Tool><RedoIcon /></Tool>
        <ToolDivider />
        <Tool><Magnifier><path d="M15 8.500 V21.500 M8.500 15 H21.500" stroke={INK} strokeWidth="4" /></Magnifier></Tool>
        <Tool><Magnifier><RLetter x="9" y="21">R</RLetter></Magnifier></Tool>
        <Tool><Magnifier><path d="M8.500 15 H21.500" stroke={INK} strokeWidth="4" /></Magnifier></Tool>
        <Tool><WindowIcon /></Tool>
        <Tool><ListIcon /></Tool>
        <ToolDivider />
        <Tool><DocIcon /></Tool>
        <Tool><DevicesIcon /></Tool>
        <Tool><CloudWindowIcon /></Tool>
        <Push><Tool><HelpIcon /></Tool></Push>
      </ToolBar>
      <ToolBar $height={70} $drop={2}>
        <Tool $selected><SelectIcon /></Tool>
        <Tool><Magnifier /></Tool>
        <Tool><EraseIcon /></Tool>
        <Tool><ResizeIcon /></Tool>
        <ToolDivider />
        <Tool><NoteIcon /></Tool>
        <Tool><LineIcon /></Tool>
        <Tool><RectIcon /></Tool>
        <Tool><EllipseIcon /></Tool>
        <Tool><BlobIcon /></Tool>
        <ToolDivider />
        <Tool><MailIcon /></Tool>
        <Tool><OpenMailIcon /></Tool>
      </ToolBar>
      <NavBar>
        <Pill $w={170} $bg="#047bad" $bold $pad={6}><NetworkGlyph /><PillText $gap={4}>Logical</PillText></Pill>
        <Pill $w={176} $pad={12} $ml={2}><RackGlyph /><PillText $gap={9.5}>Physical</PillText></Pill>
        <Coordinates>x: 312, y: 264</Coordinates>
        <RootLabel>Root</RootLabel>
        <GreyPill><BackGlyph /></GreyPill>
        <Pill $w={64}><CloudPlusGlyph /></Pill>
        <GreyPill><MoveGlyph /></GreyPill>
        <Pill $w={64}><HillsGlyph /></Pill>
        <Pill $w={150} $pad={6}><GlobeGlyph /><ClockText>01:16:30</ClockText></Pill>
        <span />
      </NavBar>
      <Workspace>
        <Topology />
        <CanvasLabel $x={87} $y={776} $w={160}>192</CanvasLabel>
        <CanvasLabel $x={53} $y={963} $w={66} $bg="#fff">Fa7/1</CanvasLabel>
        <CanvasLabel $x={89} $y={1314} $w={160}>192</CanvasLabel>
        <CanvasLabel $x={-15} $y={1440} $w={200}>ernal Network</CanvasLabel>
      </Workspace>
      <TimeBar>Time: 46:</TimeBar>
      <BottomArea>
        <Palette>
          <DeviceRow>
            <DeviceSlot><RouterArt /></DeviceSlot>
            <DeviceSlot><ComputerArt /></DeviceSlot>
            <DeviceSlot><BoardArt /></DeviceSlot>
            <DeviceSlot><BoltIcon /></DeviceSlot>
            <DeviceSlot><FolderArt /></DeviceSlot>
            <DeviceSlot><CloudArt /></DeviceSlot>
          </DeviceRow>
          <SearchField />
          <DeviceRow>
            <DeviceSlot><BoltIcon /></DeviceSlot>
            <DeviceSlot $w={72}><BuildingArt /></DeviceSlot>
          </DeviceRow>
        </Palette>
        <Connections>
          <ConnectionFrame>
            <TileRow>
              <Tile><svg width="68" height="68" viewBox="0 0 68 68"><g transform="translate(2.600 3) scale(1.050)"><Bolt /></g></svg></Tile>
              {cables.map((c, i) => <CableTile key={i} {...c} />)}
            </TileRow>
            <TileScroll><Thumb $w={136} /></TileScroll>
          </ConnectionFrame>
          <ConnectionName>Copper Straight-Through</ConnectionName>
        </Connections>
        <Splitter>
          <SplitterGrip><svg width="16" height="20"><path d="M0 0 L16 10 L0 20 Z" fill="#5c5c5c" /></svg></SplitterGrip>
        </Splitter>
        <PduColumn>
          <PduTop>
            <PduInfo>
              <svg width="32" height="32" viewBox="0 0 32 32"><circle cx="16" cy="16" r="16" fill="#fff" /><circle cx="16" cy="10" r="1.700" fill={NAVY} /><path d="M16 14 V23.500" stroke={NAVY} strokeWidth="3" /></svg>
            </PduInfo>
            <Combo><ChevronDown /></Combo>
          </PduTop>
          <PduButtons>
            <NavyButton $w={42}><span>New</span></NavyButton>
            <NavyButton $w={42}><span>Delete</span></NavyButton>
          </PduButtons>
          <PduButtons><NavyButton $w={88} $shift={-1}><span>Toggle PDU List Window</span></NavyButton></PduButtons>
        </PduColumn>
        <PduList><PduScroll><Thumb $w={60} /></PduScroll></PduList>
      </BottomArea>
    </MainWindow>

    <EdgeShade />

    <DeviceWindow>
      <TitleBar $active>
        <AppLogo />
        <TitleText $spacing={-0.2}>ExtPC</TitleText>
        <WindowButtons $right={33} $lift={2}><Caption color="#000" /></WindowButtons>
      </TitleBar>
      <DeviceBody>
        <Tabs>
          <Tab>Physical</Tab>
          <Tab>Config</Tab>
          <Tab $active>Desktop</Tab>
          <Tab>Programming</Tab>
          <Tab>Attributes</Tab>
        </Tabs>
        <TabPanel>
          <Browser>
            <BrowserTitle><span>Web Browser</span><Button $w={58} $line={42}>X</Button></BrowserTitle>
            <AddressRow>
              <Button $w={68}>&lt;</Button>
              <Button $w={68} $ml={14}>&gt;</Button>
              <UrlLabel>URL</UrlLabel>
              <UrlInput>http://www.company.com</UrlInput>
              <Button $w={147} $ml={14} $focus>Go</Button>
              <Button $w={148} $ml={14}>Stop</Button>
            </AddressRow>
            <Page>
              <h1>This is the official company's page for Emmanuel</h1>
              <p>Click on the items below to select your product:</p>
              <ul>
                <li><a>Cable</a></li>
                <li><a>Computer</a></li>
                <li><a>Router</a></li>
              </ul>
            </Page>
          </Browser>
        </TabPanel>
        <TopCheck><Box />Top</TopCheck>
      </DeviceBody>
    </DeviceWindow>

    <Taskbar>
      <TaskCard><TaskCardFront><TaskIconEdge /></TaskCardFront></TaskCard>
      <Tray>
        <TraySlot $w={64}><svg width="22" height="13" viewBox="0 0 22 13"><path d="M1 12 L11 2 L21 12" fill="none" stroke="#191919" strokeWidth="2" /></svg></TraySlot>
        <TraySlot $w={66}>
          <svg width="34" height="28" viewBox="0 0 34 28"><path d="M9 23.500 Q1.500 23 1.500 16 Q2 10 8.500 9.500 Q11 3 18 3 Q24 3.500 26 9 Q32.500 11 32 17 Q31.500 23 26 23.500 Z" fill="#b0b0b0" stroke="#000" strokeWidth="2" /><path d="M11 5 Q23 1 26 10 Q20 11 17 13 Z" fill="#858585" /><path d="M7 -0.500 L32 23.500" stroke="#eee" strokeWidth="3" /><path d="M5 1.500 L30 26" stroke="#000" strokeWidth="2" /></svg>
        </TraySlot>
        <TraySlot $w={62}>
          <svg width="32" height="26" viewBox="0 0 32 26" fill="none" stroke="#191919" strokeWidth="1.900"><path d="M0.500 10 Q16 -6 31.500 10 M4.500 13.500 Q16 2 27.500 13.500 M9 17.500 Q16 10.500 23 17.500" /><circle cx="16" cy="21" r="3" fill="#191919" stroke="none" /></svg>
        </TraySlot>
        <TraySlot $w={34}>
          <svg width="33" height="28" viewBox="0 0 33 28" fill="none" stroke="#191919" strokeWidth="1.900"><path d="M1.500 8.500 H6.500 L13.500 3 V25 L6.500 19.500 H1.500 Z" strokeLinejoin="round" /><path d="M17 10 Q20 14 17 18 M21 6 Q27 14 21 22 M25 1.500 Q35.500 14 25 26.500" /></svg>
        </TraySlot>
        <TraySlot $w={61}>
          <svg width="33" height="28" viewBox="0 0 33 28"><path d="M17 7 H25 Q28 7 28 10 V21 Q28 24 25 24 H4" fill="none" stroke="#191919" strokeWidth="2" /><path d="M29 12 H32.500 V18 H29 Z M10 0 Q18 9 14 15 Q10 19 2 18 Q-2 9 10 0 Z M10 21 L18 11 V21 Z" fill="#191919" /><path d="M2 22 Q9 17 13 8" stroke="#eee" strokeWidth="1.600" fill="none" /></svg>
        </TraySlot>
      </Tray>
      <Clock>17:54<br />08/06/2025</Clock>
    </Taskbar>
  </Screen>
);

export default App;
